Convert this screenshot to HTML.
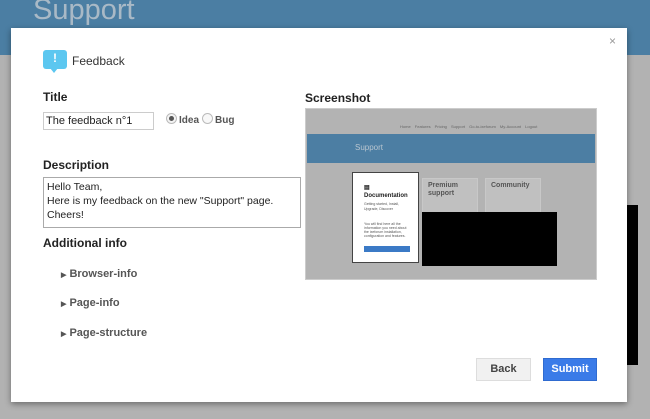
<!DOCTYPE html>
<html><head><style>
body{margin:0;width:650px;height:419px;background:#b2b2b2;position:relative;overflow:hidden;font-family:"Liberation Sans",Arial,sans-serif}
.abs{position:absolute;box-sizing:border-box;white-space:nowrap}
.hdr{left:0;top:0;width:650px;height:55px;background:#4b7ea3}
.hdr span{position:absolute;left:33px;top:-6px;font-size:29px;color:#a9b9c6}
.modal{left:11px;top:28px;width:616px;height:374px;background:#fff;box-shadow:0 2px 6px rgba(0,0,0,.4)}
.lbl{font-weight:bold;font-size:12px;color:#222}
.sub{font-weight:bold;font-size:11px;color:#555}
</style></head><body>
<div class="abs hdr"><span>Support</span></div>
<div class="abs" style="left:627px;top:205px;width:11px;height:160px;background:#000"></div>
<div class="abs modal"></div>
<div class="abs" style="left:609px;top:34px;font-size:12px;color:#999">×</div>
<div class="abs" style="left:43px;top:50px;width:24px;height:19px;background:#5cc7f0;border-radius:3px"></div>
<div class="abs" style="left:50px;top:68px;width:0;height:0;border-left:4px solid transparent;border-right:4px solid transparent;border-top:5px solid #5cc7f0"></div>
<div class="abs" style="left:53px;top:51px;color:#fff;font-size:12px;font-weight:bold">!</div>
<div class="abs" style="left:72px;top:54px;font-size:12px;color:#333">Feedback</div>
<div class="abs lbl" style="left:43px;top:90px">Title</div>
<div class="abs" style="left:43px;top:112px;width:111px;height:18px;border:1px solid #ccc;font-size:11px;line-height:16px;padding-left:2px;color:#222">The feedback n°1</div>
<div class="abs" style="left:166px;top:113px;width:11px;height:11px;border:1px solid #bbb;border-radius:50%;background:#f4f4f4"></div>
<div class="abs" style="left:169px;top:116px;width:5px;height:5px;border-radius:50%;background:#555"></div>
<div class="abs sub" style="left:179px;top:115px;font-size:10px">Idea</div>
<div class="abs" style="left:202px;top:113px;width:11px;height:11px;border:1px solid #bbb;border-radius:50%;background:#f8f8f8"></div>
<div class="abs sub" style="left:215px;top:115px;font-size:10px">Bug</div>
<div class="abs lbl" style="left:43px;top:158px">Description</div>
<div class="abs" style="left:43px;top:177px;width:258px;height:51px;border:1px solid #aaa;font-size:10.5px;line-height:14px;padding:2px 3px;color:#222">Hello Team,<br>Here is my feedback on the new "Support" page.<br>Cheers!</div>
<div class="abs lbl" style="left:43px;top:236px">Additional info</div>
<div class="abs sub" style="left:61px;top:268px"><span style="font-size:7px">▶</span> Browser-info</div>
<div class="abs sub" style="left:61px;top:297px"><span style="font-size:7px">▶</span> Page-info</div>
<div class="abs sub" style="left:61px;top:327px"><span style="font-size:7px">▶</span> Page-structure</div>
<div class="abs lbl" style="left:305px;top:91px">Screenshot</div>
<div class="abs" style="left:305px;top:108px;width:292px;height:172px;border:1px solid #ccc;background:#b3b3b3"></div>
<div class="abs" style="left:307px;top:134px;width:288px;height:29px;background:#4c7ea3"></div>
<div class="abs" style="left:355px;top:143px;font-size:8px;color:#b9c6d0">Support</div>
<div class="abs" style="left:400px;top:124px;font-size:4px;color:#666;word-spacing:3px">Home Features Pricing Support Go-to-ixeforum My-Account Logout</div>
<div class="abs" style="left:422px;top:178px;width:56px;height:40px;background:#c0c0c0;border:1px solid #c8c8c8"></div>
<div class="abs" style="left:485px;top:178px;width:56px;height:40px;background:#c0c0c0;border:1px solid #c8c8c8"></div>
<div class="abs" style="left:428px;top:182px;font-size:7px;font-weight:bold;color:#555;line-height:8px">Premium<br>support</div>
<div class="abs" style="left:491px;top:182px;font-size:7px;font-weight:bold;color:#555">Community</div>
<div class="abs" style="left:352px;top:172px;width:67px;height:91px;background:#fff;border:1px solid #444"></div>
<div class="abs" style="left:364px;top:184px;font-size:6px;font-weight:bold;color:#222;line-height:8px">▤<br>Documentation</div>
<div class="abs" style="left:364px;top:202px;font-size:3.5px;color:#555;line-height:5px">Getting started, Install,<br>Upgrade, Discover</div>
<div class="abs" style="left:364px;top:222px;font-size:3.5px;color:#555;line-height:4px">You will find here all the<br>information you need about<br>the ixeforum installation,<br>configuration and features.</div>
<div class="abs" style="left:364px;top:246px;width:46px;height:6px;background:#3b7ac6"></div>
<div class="abs" style="left:422px;top:212px;width:135px;height:54px;background:#000"></div>
<div class="abs" style="left:476px;top:358px;width:55px;height:23px;background:#f1f1f1;border:1px solid #ddd;font-size:11px;font-weight:bold;color:#444;text-align:center;line-height:21px">Back</div>
<div class="abs" style="left:543px;top:358px;width:54px;height:23px;background:#3a7be8;border:1px solid #2f6bd0;font-size:11px;font-weight:bold;color:#fff;text-align:center;line-height:21px">Submit</div>
</body></html>
